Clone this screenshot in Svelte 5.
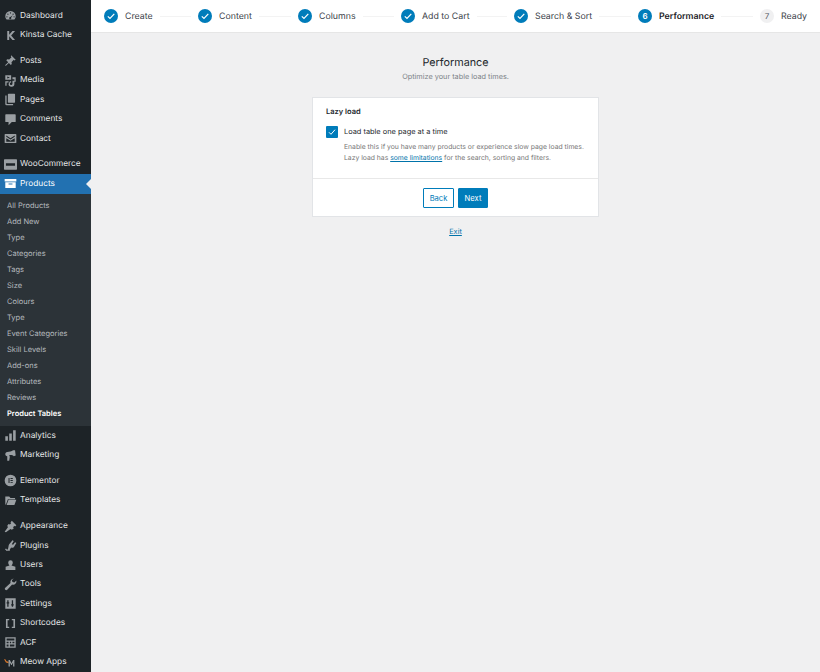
<script>
  const icons = {
    dashboard: 'M10 3a8 8 0 0 0-8 8c0 2 .8 3.900 2 5h12c1.200-1.100 2-3 2-5a8 8 0 0 0-8-8zm0 2a1 1 0 1 1 0 2 1 1 0 0 1 0-2zM6 7a1 1 0 1 1 0 2 1 1 0 0 1 0-2zm8 0a1 1 0 1 1 0 2 1 1 0 0 1 0-2zm-.5 2.500L11 13.200a1.600 1.600 0 1 1-1.300-.8zM4.500 11a1 1 0 1 1 0 2 1 1 0 0 1 0-2zm11 0a1 1 0 1 1 0 2 1 1 0 0 1 0-2z',
    kinsta: 'M5 3h3v6l5-6h4l-6 7 6 7h-4l-5-6v6H5z',
    pin: 'M11 2l7 7-2 1-1-1-3.500 3.500.5 3-1.500 1.500-3-3L3 18l-1 0 0-1 4.500-4.500-3-3L5 8l3 .5L11.500 5l-1-1z',
    media: 'M2 2h9v7H2zm3 2v3l4-1.500zM13 5h5v3h-5zM9 11h2v2a2 2 0 1 0 2 2v-4.500h3V15a4.500 4.500 0 0 1-9 .5zM2 11h5v2H4v5H2zM16 5h2v7h-2z',
    pages: 'M7 1h9a1 1 0 0 1 1 1v12a1 1 0 0 1-1 1H7a1 1 0 0 1-1-1V2a1 1 0 0 1 1-1zM4 4v12a1 1 0 0 0 1 1h9v2H4a2 2 0 0 1-2-2V4z',
    comments: 'M3 2h14a1 1 0 0 1 1 1v10a1 1 0 0 1-1 1h-5l-5 5v-5H3a1 1 0 0 1-1-1V3a1 1 0 0 1 1-1z',
    mail: 'M2 3h16a1 1 0 0 1 1 1v12a1 1 0 0 1-1 1H2a1 1 0 0 1-1-1V4a1 1 0 0 1 1-1zm1.500 2.500v1.800L10 11.500l6.500-4.200V5.500L10 9.500zM3.500 9.500v5.500h13V9.500L10 13.500z',
    woo: 'M1 2h18a1 1 0 0 1 1 1v14a1 1 0 0 1-1 1H1a1 1 0 0 1-1-1V3a1 1 0 0 1 1-1zm2 6v4h14V8z',
    products: 'M1 3h18v4H1zm1 5h16v9H2zm5 2v1.500h6V10z',
    analytics: 'M2 11h4v7H2zm6-4h4v11H8zm6-5h4v16h-4z',
    megaphone: 'M14 2l3 0 1 8-3 1c-2-2-5-2-7-1.500L9 12l-1 6-3 0 0-7C3 11 2 9.500 2 8c0-2 1-3 3-3.500C8 4 12 4 14 2z',
    elementor: 'M10 1a9 9 0 1 0 0 18 9 9 0 0 0 0-18zM7 6h1.500v8H7zm3 0h3.500v1.500H10zm0 3.200h3.500v1.600H10zm0 3.300h3.500V14H10z',
    folder: 'M2 4h6l2 2h7v2H6l-3 8H2zm5 5h12l-3 8H4z',
    brush: 'M12 1l7 7-2 2-1-1-2 2 1 2-3 2-2-1-7 5-2-1 5-7-1-2 2-3 2 1 2-2-1-1z',
    plugin: 'M13 2l2 1-3 5 2 1 3-4 2 1-3 5c-1 2-3 3-5 2l-2 3v2H3v-2h3l1-5c0-1 1-3 2-4zM2 15h2v2H2z',
    users: 'M10 2a3.500 3.500 0 0 1 3.500 3.500c0 2-1 3.500-2 4.500l6 2v5H2.500v-5l6-2c-1-1-2-2.500-2-4.500A3.500 3.500 0 0 1 10 2z',
    wrench: 'M15 1a5 5 0 0 0-5 6.500L2 15c-1 1-1 2 0 3s2 1 3 0l7.500-8A5 5 0 0 0 19 4l-3 3-3-1-1-3 3-2z',
    settings: 'M2 2h16v16H2zm3 3v3H4v2h1v5h2v-5h1V8H7V5zm7 0v6h-1v2h1v2h2v-2h1v-2h-1V5z',
    brackets: 'M3 3h5v2H5.500v10H8v2H3zm9 0h5v14h-5v-2h2.500V5H12z',
    acf: 'M2 2h16v16H2zm2 2v3h12V4zm0 5v2h3V9zm5 0v2h2V9zm4 0v2h3V9zm-9 4v3h3v-3zm5 0v3h7v-3z'
  };

  const topMenu = [
    [['Dashboard', 'dashboard'], ['Kinsta Cache', 'kinsta']],
    [['Posts', 'pin'], ['Media', 'media'], ['Pages', 'pages'], ['Comments', 'comments'], ['Contact', 'mail']]
  ];
  const bottomMenu = [
    [['Analytics', 'analytics'], ['Marketing', 'megaphone']],
    [['Elementor', 'elementor'], ['Templates', 'folder']],
    [['Appearance', 'brush'], ['Plugins', 'plugin'], ['Users', 'users'], ['Tools', 'wrench'], ['Settings', 'settings'], ['Shortcodes', 'brackets'], ['ACF', 'acf']]
  ];
  const subItems = ['All Products', 'Add New', 'Type', 'Categories', 'Tags', 'Size', 'Colours', 'Type', 'Event Categories', 'Skill Levels', 'Add-ons', 'Attributes', 'Reviews'];

  const steps = [
    { label: 'Create', width: 94 },
    { label: 'Content', width: 100 },
    { label: 'Columns', width: 103 },
    { label: 'Add to Cart', width: 113 },
    { label: 'Search & Sort', width: 124 }
  ];
</script>

{#snippet icon(name)}
  <svg class="menu-icon" viewBox="0 0 20 20"><path d={icons[name]} /></svg>
{/snippet}

{#snippet group(items)}
  <ul class="menu-group">
    {#each items as [label, name]}
      <li class="menu-item">{@render icon(name)}<span>{label}</span></li>
    {/each}
  </ul>
{/snippet}

<div class="layout">
  <nav class="sidebar">
    {#each topMenu as items}
      {@render group(items)}
    {/each}
    <ul class="menu-group">
      <li class="menu-item">{@render icon('woo')}<span>WooCommerce</span></li>
      <li class="menu-item current">{@render icon('products')}<span>Products</span></li>
    </ul>
    <ul class="submenu">
      {#each subItems as item}
        <li>{item}</li>
      {/each}
      <li class="active">Product Tables</li>
    </ul>
    {#each bottomMenu as items, i}
      <ul class="menu-group">
        {#each items as [label, name]}
          <li class="menu-item">{@render icon(name)}<span>{label}</span></li>
        {/each}
        {#if i === 2}
          <li class="menu-item">
            <svg class="menu-icon" viewBox="0 0 20 20">
              <path class="meow" d="M0 5l2 0 2 3 3 1 0 2-4-1z" />
              <path d="M7 16V6h2l2.500 5L14 6h2v10h-2v-6l-2 4h-1l-2-4v6z" />
            </svg>
            <span>Meow Apps</span>
          </li>
        {/if}
      </ul>
    {/each}
  </nav>

  <div class="content">
    <header class="stepper">
      {#each steps as step}
        <div class="step" style="width: {step.width}px">
          <span class="dot">
            <svg viewBox="0 0 14 14"><path d="M3.800 7.300l2.200 2.200 4.300-4.600" /></svg>
          </span>
          <span class="step-label">{step.label}</span>
          <span class="line"></span>
        </div>
      {/each}
      <div class="step current" style="width: 122px">
        <span class="dot">6</span>
        <span class="step-label">Performance</span>
        <span class="line"></span>
      </div>
      <div class="step todo">
        <span class="dot">7</span>
        <span class="step-label">Ready</span>
      </div>
    </header>

    <main class="page">
      <h1>Performance</h1>
      <p class="subtitle">Optimize your table load times.</p>

      <section class="card">
        <div class="card-body">
          <h2>Lazy load</h2>
          <div class="field">
            <span class="checkbox">
              <svg viewBox="0 0 12 12"><path d="M3 6.300l2 2 4-4.600" /></svg>
            </span>
            <div>
              <div class="field-label">Load table one page at a time</div>
              <p class="help">
                Enable this if you have many products or experience slow page load times.<br />
                Lazy load has <a href="#limits">some limitations</a> for the search, sorting and filters.
              </p>
            </div>
          </div>
        </div>
        <div class="card-actions">
          <button class="btn outline">Back</button>
          <button class="btn primary">Next</button>
        </div>
      </section>

      <a class="exit" href="#exit">Exit</a>
    </main>
  </div>
</div>

<style>
  :global(body) {
    background: #f0f0f1;
  }

  .layout {
    display: flex;
    height: 672px;
    overflow: hidden;
    font-family: Inter, "Liberation Sans", sans-serif;
    text-rendering: geometricPrecision;
  }

  .sidebar {
    flex: 0 0 91px;
    background: #1d2327;
    color: #f0f0f1;
    padding-top: 6px;
    box-sizing: border-box;
  }

  ul {
    list-style: none;
    margin: 0;
    padding: 0;
  }

  .menu-group {
    margin-bottom: 6.500px;
  }

  .menu-group:has(.current) {
    margin-bottom: 0;
  }

  .menu-item {
    position: relative;
    display: flex;
    align-items: center;
    height: 19.400px;
    padding-left: 4px;
    gap: 3px;
    font-size: 8.300px;
    color: #e6e8e9;
  }

  .menu-icon {
    flex: 0 0 13px;
    width: 13px;
    height: 13px;
    fill: #9a9fa3;
  }

  .meow {
    fill: #d9772b;
  }

  .menu-item.current {
    background: #2271b1;
    color: #fff;
  }

  .menu-item.current .menu-icon {
    fill: #fff;
  }

  .menu-item.current::after {
    content: "";
    position: absolute;
    right: 0;
    top: 50%;
    margin-top: -5px;
    border: 5px solid transparent;
    border-right-color: #f0f0f1;
    border-left-width: 0;
  }

  .submenu {
    background: #2c3338;
    padding: 4.500px 0 4px;
  }

  .submenu li {
    height: 16px;
    line-height: 16px;
    padding-left: 7px;
    font-size: 7.500px;
    color: #b4b9be;
  }

  .submenu li.active {
    color: #fff;
    font-weight: 600;
  }

  .content {
    flex: 1;
    min-width: 0;
    display: flex;
    flex-direction: column;
  }

  .stepper {
    display: flex;
    align-items: center;
    height: 33px;
    box-sizing: border-box;
    padding-left: 13px;
    background: #fff;
    border-bottom: 1px solid #e6e6e6;
    font-size: 8.800px;
    color: #3c434a;
  }

  .step {
    display: flex;
    align-items: center;
    flex: none;
  }

  .dot {
    flex: none;
    width: 14px;
    height: 14px;
    border-radius: 50%;
    background: #007cba;
    color: #fff;
    font-size: 8px;
    font-weight: 600;
    display: flex;
    align-items: center;
    justify-content: center;
  }

  .dot svg {
    width: 14px;
    height: 14px;
    fill: none;
    stroke: #fff;
    stroke-width: 1.200;
  }

  .step-label {
    margin-left: 7px;
    white-space: nowrap;
  }

  .line {
    flex: 1;
    height: 1px;
    margin: 0 7px;
    background: #f3f3f3;
  }

  .step.current .step-label {
    font-weight: 600;
    color: #1d2327;
  }

  .step.todo .dot {
    background: #f0f0f1;
    color: #50575e;
    font-weight: 400;
  }

  .page {
    display: flex;
    flex-direction: column;
    align-items: center;
    padding-top: 23px;
  }

  h1 {
    margin: 0;
    font-size: 10.800px;
    line-height: 14px;
    font-weight: 400;
    color: #23282d;
  }

  .subtitle {
    margin: 1px 0 0;
    font-size: 7.300px;
    line-height: 12px;
    color: #7c8287;
  }

  .card {
    width: 287px;
    margin-top: 14px;
    background: #fff;
    border: 1px solid #e2e4e7;
    box-sizing: border-box;
  }

  .card-body {
    padding: 8px 13px 14.500px;
    border-bottom: 1px solid #e8e8e8;
  }

  h2 {
    margin: 0;
    font-size: 7.500px;
    line-height: 11px;
    font-weight: 600;
    color: #23282d;
  }

  .field {
    display: flex;
    gap: 6px;
    margin-top: 9px;
  }

  .checkbox {
    flex: none;
    width: 12px;
    height: 12px;
    border-radius: 1px;
    background: #007cba;
    display: flex;
  }

  .checkbox svg {
    fill: none;
    stroke: #fff;
    stroke-width: 1;
  }

  .field-label {
    font-size: 7.400px;
    line-height: 12px;
    color: #23282d;
  }

  .help {
    margin: 4px 0 0;
    font-size: 6.800px;
    line-height: 10.700px;
    color: #757575;
    white-space: nowrap;
  }

  .help a,
  .exit {
    color: #0073aa;
    text-decoration: underline;
  }

  .card-actions {
    display: flex;
    justify-content: center;
    gap: 4px;
    padding: 9px 0 8px;
  }

  .btn {
    height: 20.500px;
    padding: 0;
    font: inherit;
    font-size: 7.600px;
    border-radius: 1px;
    box-sizing: border-box;
  }

  .btn.outline {
    width: 31px;
    background: #fff;
    color: #007cba;
    border: 1px solid #007cba;
  }

  .btn.primary {
    width: 30px;
    background: #007cba;
    color: #fff;
    border: 1px solid #007cba;
  }

  .exit {
    margin-top: 9px;
    font-size: 7.400px;
    line-height: 11px;
  }
</style>
